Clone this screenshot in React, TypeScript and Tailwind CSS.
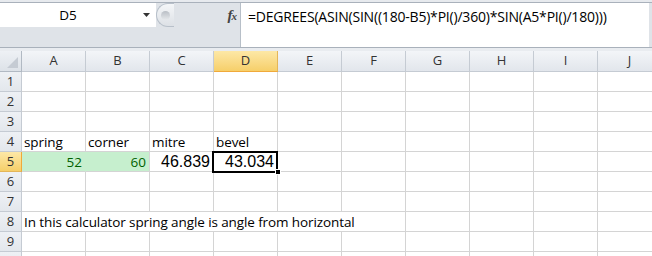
import React from "react";

const cols = ["A", "B", "C", "D", "E", "F", "G", "H", "I", "J"];
const rows = [1, 2, 3, 4, 5, 6, 7, 8, 9, 10];

const cellFont = { fontFamily: '"Open Sans", "Noto Sans", sans-serif' };

function Cell({ row, col }: { row: number; col: string }) {
  const base =
    "relative h-[20px] border-r border-b border-[#d4d4d4] flex items-end overflow-visible whitespace-nowrap";

  if (row === 4) {
    const labels: Record<string, string> = { A: "spring", B: "corner", C: "mitre", D: "bevel" };
    return (
      <div className={`${base} bg-white`}>
        {labels[col] && (
          <span className="pl-[2px] pb-[1px] text-[13.5px] leading-[16px] tracking-[-0.1px] text-black" style={cellFont}>
            {labels[col]}
          </span>
        )}
      </div>
    );
  }

  if (row === 5) {
    if (col === "A" || col === "B") {
      return (
        <div className={`${base} justify-end bg-[#c6efce] ${col === "A" ? "border-r-[#c6efce]" : ""}`}>
          <span className="pr-[3px] pb-[1px] text-[13.5px] leading-[16px] text-[#006100]" style={cellFont}>
            {col === "A" ? "52" : "60"}
          </span>
        </div>
      );
    }
    if (col === "C" || col === "D") {
      return (
        <div className={`${base} justify-end bg-white`}>
          <span className="pr-[3px] text-[16px] leading-[19px] text-black font-['Liberation_Sans',Arial,sans-serif]">
            {col === "C" ? "46.839" : "43.034"}
          </span>
          {col === "D" && (
            <>
              <div className="absolute z-10 left-[-2px] top-[-1px] w-[66px] h-[22px] border-2 border-black" />
              <div className="absolute z-10 right-[-4px] bottom-[-4px] w-[6px] h-[6px] bg-black border border-white" />
            </>
          )}
        </div>
      );
    }
  }

  return <div className={`${base} bg-white`} />;
}

export default function App() {
  return (
    <div className="w-[652px] h-[256px] overflow-hidden bg-[#dfe3e8] font-['Open_Sans',sans-serif]">
      {/* ribbon edge */}
      <div className="h-[3px] bg-[#e7eaee] border-b border-[#a9b1bb]" />

      {/* name box + formula bar */}
      <div className="flex h-[44px]">
        <div className="flex flex-col w-[240px]">
          <div className="flex h-[24px]">
            <div className="relative w-[156px] bg-white flex items-center">
              <span className="w-[136px] text-center text-[13.5px] text-black" style={cellFont}>
                D5
              </span>
              <svg className="absolute left-[143px] top-[10px]" width="7" height="4" viewBox="0 0 7 4">
                <path d="M0 0 H7 L3.5 4 Z" fill="#333" />
              </svg>
            </div>
            <div className="w-[18px] h-[24px] rounded-l-full bg-gradient-to-b from-[#f4f6f8] to-[#dde1e6] border border-r-0 border-[#b8c0ca] flex items-center justify-center">
              <div className="w-[9px] h-[9px] rounded-full bg-gradient-to-b from-[#b9bec5] to-[#e6e9ec]" />
            </div>
            <div className="flex-1 flex items-center justify-end pr-[4px]">
              <span className="font-['Liberation_Serif',serif] italic font-bold text-[15px] text-[#444] tracking-[-1px]">
                f<span className="text-[11px]">x</span>
              </span>
            </div>
          </div>
          <div className="flex-1" />
        </div>
        <div className="w-[409px] bg-white border-l border-[#b7bfc8] pl-[7px] pt-[1px]">
          <span className="text-[14px] leading-[20px] text-black tracking-[-0.2px]" style={cellFont}>
            =DEGREES(ASIN(SIN((180-B5)*PI()/360)*SIN(A5*PI()/180)))
          </span>
        </div>
      </div>

      {/* separator */}
      <div className="h-[4px] border-t border-[#a9b1bb] bg-[#e9ecf0]" />

      {/* sheet grid */}
      <div className="grid grid-cols-[22px_repeat(10,64px)] grid-rows-[21px_repeat(10,20px)] w-[662px] text-[#333]">
        <div className="relative bg-gradient-to-b from-[#eef1f5] to-[#dde2e8] border-r border-b border-[#b1b9c3]">
          <svg className="absolute right-[3px] bottom-[3px]" width="11" height="11" viewBox="0 0 11 11">
            <path d="M11 0 V11 H0 Z" fill="#c5cbd3" />
          </svg>
        </div>
        {cols.map((c) => (
          <div
            key={c}
            className={`flex items-center justify-center border-r border-b text-[13px] ${
              c === "D"
                ? "bg-gradient-to-b from-[#fde8a6] to-[#f6cf69] border-r-[#e4b659] border-b-[#f0a93a]"
                : "bg-gradient-to-b from-[#f3f5f8] to-[#e2e6ec] border-[#c5cbd3]"
            }`}
          >
            {c}
          </div>
        ))}
        {rows.map((r) => (
          <React.Fragment key={r}>
            <div
              className={`flex items-center justify-center border-r border-b text-[13px] ${
                r === 5
                  ? "bg-gradient-to-b from-[#fde8a6] to-[#f6cf69] border-r-[#f0a93a] border-b-[#e4b659]"
                  : "bg-gradient-to-b from-[#eef1f5] to-[#e3e7ec] border-[#c5cbd3]"
              }`}
            >
              {r < 10 ? r : ""}
            </div>
            {r === 8 ? (
              <>
                <div className="col-span-6 h-[20px] border-r border-b border-[#d4d4d4] bg-white flex items-end whitespace-nowrap">
                  <span className="pl-[2px] pb-[1px] text-[13.5px] leading-[16px] tracking-[-0.1px] text-black" style={cellFont}>
                    In this calculator spring angle is angle from horizontal
                  </span>
                </div>
                {cols.slice(6).map((c) => (
                  <Cell key={c} row={r} col={c} />
                ))}
              </>
            ) : (
              cols.map((c) => <Cell key={c} row={r} col={c} />)
            )}
          </React.Fragment>
        ))}
      </div>
    </div>
  );
}
